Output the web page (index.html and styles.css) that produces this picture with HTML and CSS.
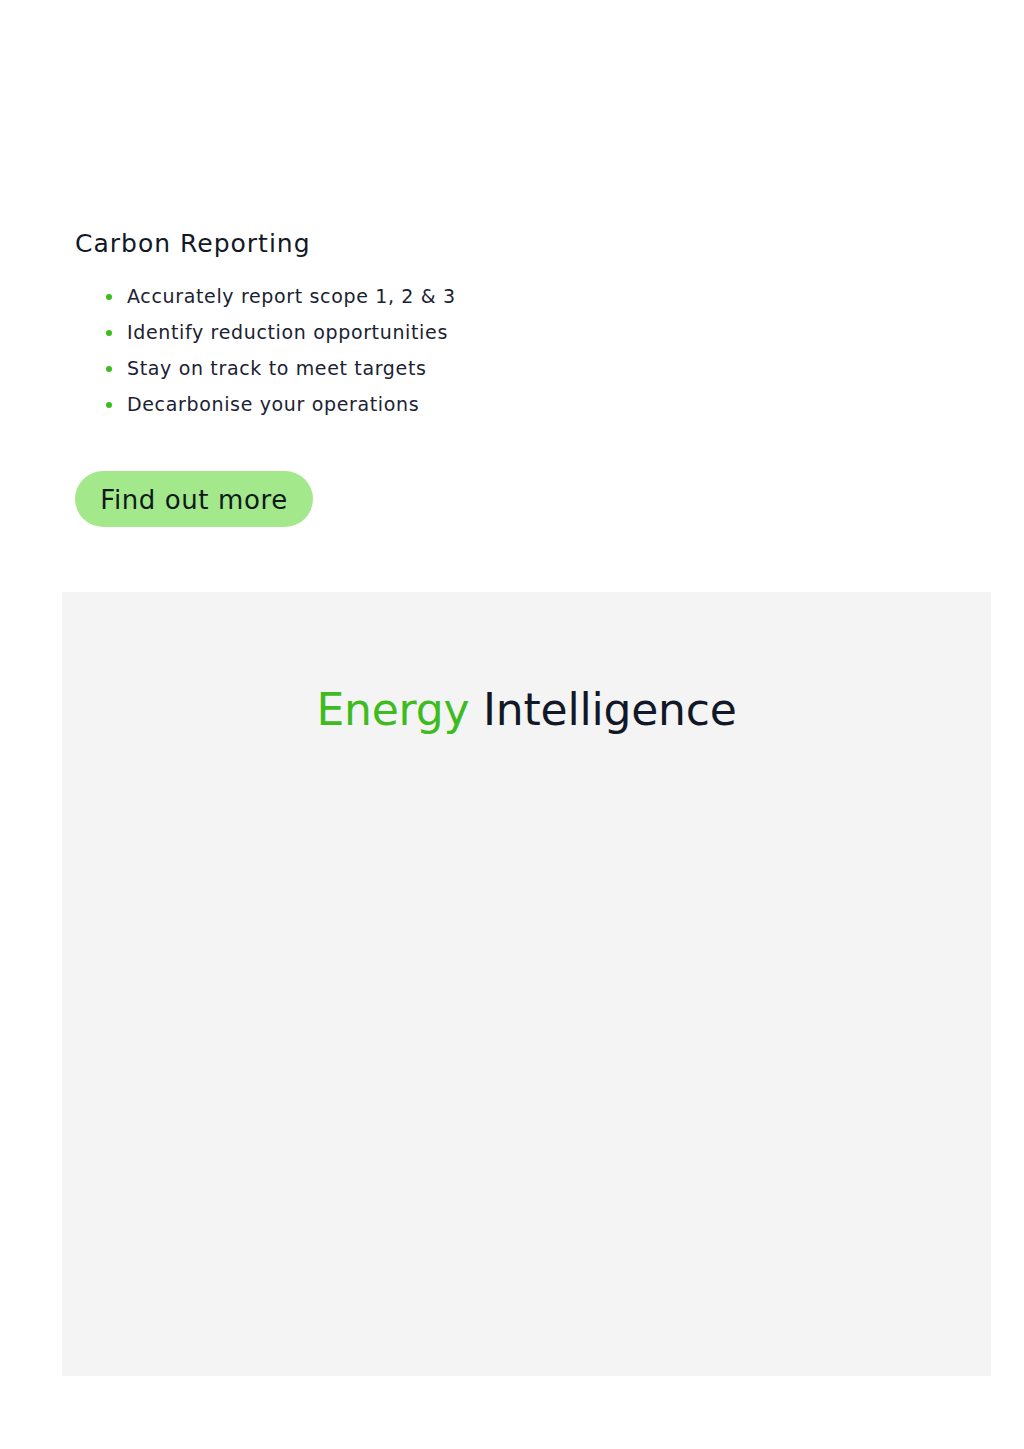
FILE: index.html
```html
<!DOCTYPE html>
<html lang="en">
<head>
<meta charset="utf-8">
<title>Carbon Reporting</title>
<link rel="stylesheet" href="styles.css">
</head>
<body>
<main class="page">
  <section class="feature">
    <h3 class="feature-title">Carbon Reporting</h3>
    <ul class="feature-list">
      <li>Accurately report scope 1, 2 &amp; 3</li>
      <li>Identify reduction opportunities</li>
      <li>Stay on track to meet targets</li>
      <li>Decarbonise your operations</li>
    </ul>
    <a class="btn" href="#">Find out more</a>
  </section>
  <section class="panel">
    <h2 class="panel-title"><span class="accent">Energy</span> Intelligence</h2>
  </section>
</main>
</body>
</html>
```
FILE: styles.css
```css
* { box-sizing: border-box; }
html, body { margin: 0; padding: 0; background: #ffffff; }
body {
  font-family: "DejaVu Sans", "Open Sans", sans-serif;
  color: #111827;
}
.page {
  padding: 0 33px 73px 62px;
}
.feature {
  padding: 229px 0 0 13px;
}
.feature-title {
  margin: 0;
  font-size: 25px;
  font-weight: 400;
  line-height: 30px;
  letter-spacing: 1px;
  color: #111827;
}
.feature-list {
  list-style: none;
  margin: 19px 0 0;
  padding: 0 0 0 31px;
}
.feature-list li {
  position: relative;
  font-size: 19px;
  line-height: 36px;
  letter-spacing: 0.65px;
  color: #1a2233;
  padding-left: 21px;
}
.feature-list li::before {
  content: "";
  position: absolute;
  left: 0;
  top: 16px;
  width: 6px;
  height: 6px;
  border-radius: 50%;
  background: #3dbb1f;
}
.btn {
  display: inline-flex;
  align-items: center;
  justify-content: center;
  margin-top: 49px;
  padding-top: 2px;
  width: 238px;
  height: 56px;
  border-radius: 28px;
  background: #a3e88a;
  color: #0f1a1a;
  font-size: 26px;
  letter-spacing: 0.6px;
  text-decoration: none;
}
.panel {
  margin-top: 65px;
  height: 784px;
  background: #f4f4f4;
  padding-top: 88px;
}
.panel-title {
  margin: 0;
  text-align: center;
  font-size: 44px;
  font-weight: 400;
  line-height: 60px;
  letter-spacing: -0.2px;
  color: #111827;
}
.accent { color: #3dbb1f; }
```
